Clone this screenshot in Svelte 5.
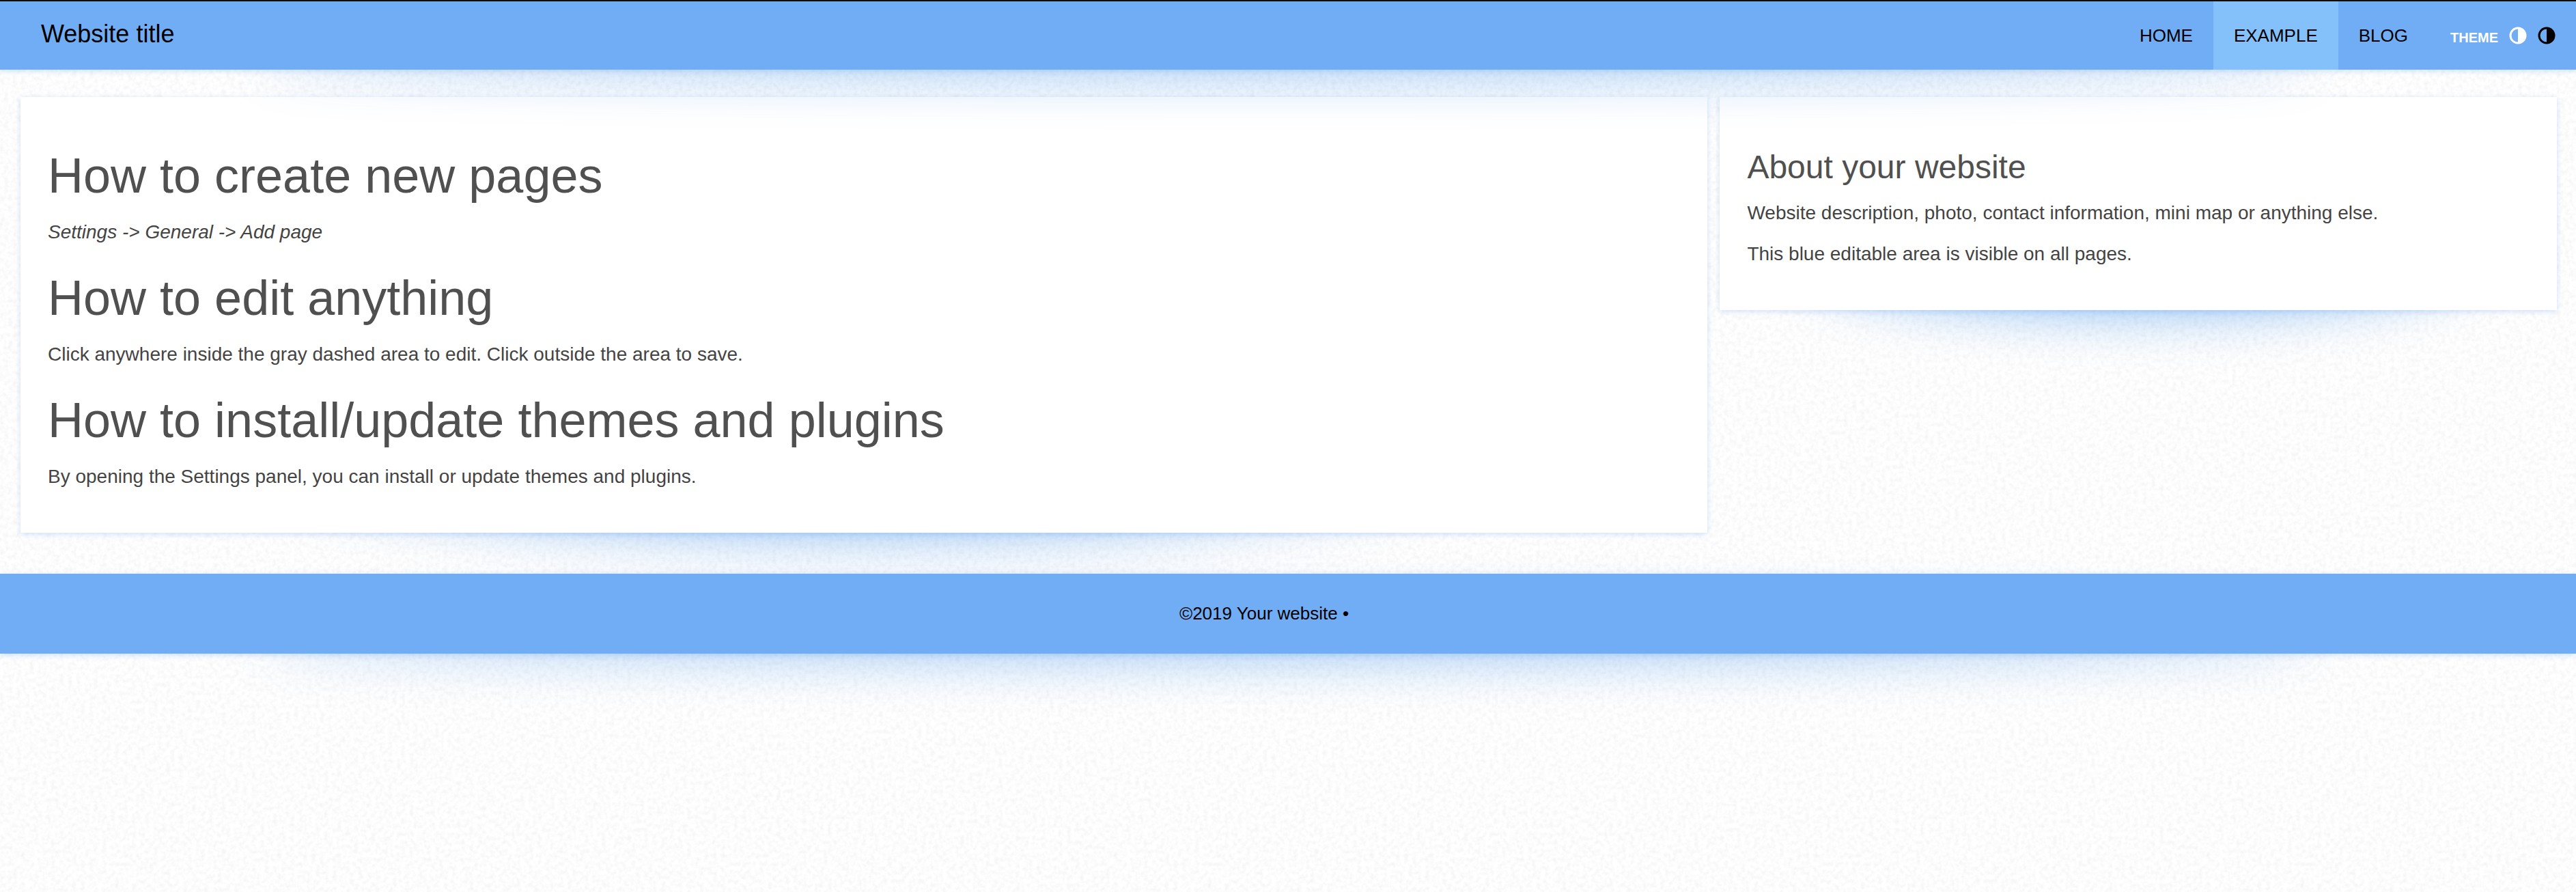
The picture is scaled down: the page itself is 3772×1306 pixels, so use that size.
<script>
  const pages = [
    { name: 'HOME', active: false },
    { name: 'EXAMPLE', active: true },
    { name: 'BLOG', active: false }
  ];
  const themes = [
    { name: 'Light theme', tone: 'light' },
    { name: 'Dark theme', tone: 'dark' }
  ];
</script>

<div class="page">
  <svg class="paper" aria-hidden="true">
    <filter id="grain" x="0" y="0" width="100%" height="100%">
      <feTurbulence type="fractalNoise" baseFrequency="0.16" numOctaves="3" seed="4" />
      <feColorMatrix values="0 0 0 0 0.4  0 0 0 0 0.4  0 0 0 0 0.4  0.24 0 0 0 -0.09" />
    </filter>
    <rect width="100%" height="100%" filter="url(#grain)" />
  </svg>

  <header class="glow">
    <div class="bar">
      <a class="brand" href="#home">Website title</a>
      <nav>
        {#each pages as page}
          <a href="#{page.name.toLowerCase()}" class:active={page.active}>{page.name}</a>
        {/each}
      </nav>
      <div class="themes">
        <span class="label">THEME</span>
        {#each themes as theme}
          <button class={theme.tone} aria-label={theme.name}>
            <svg viewBox="0 0 26 26">
              <circle cx="13" cy="13" r="11" fill="none" stroke="currentColor" stroke-width="3" />
              <path d="M13 1a12 12 0 0 1 0 24z" fill="currentColor" />
            </svg>
          </button>
        {/each}
      </div>
    </div>
  </header>

  <main>
    <article class="glow">
      <div class="card">
        <h1>How to create new pages</h1>
        <p><i>Settings -&gt; General -&gt; Add page</i></p>
        <h1>How to edit anything</h1>
        <p>Click anywhere inside the gray dashed area to edit. Click outside the area to save.</p>
        <h1>How to install/update themes and plugins</h1>
        <p>By opening the Settings panel, you can install or update themes and plugins.</p>
      </div>
    </article>
    <aside class="glow">
      <div class="card">
        <h2>About your website</h2>
        <p>Website description, photo, contact information, mini map or anything else.</p>
        <p>This blue editable area is visible on all pages.</p>
      </div>
    </aside>
  </main>

  <footer class="glow">
    <p>©2019 Your website •</p>
  </footer>
</div>

<style>
  :global(body) {
    background: #fff;
    font-family: "Liberation Sans", Arial, sans-serif;
    font-size: 28px;
    line-height: 40px;
    color: #444;
  }

  .page {
    position: relative;
    z-index: 0;
    min-height: 100vh;
  }

  .paper {
    position: absolute;
    inset: 0;
    z-index: -1;
    width: 100%;
    height: 100%;
  }

  /* Curved shadow thrown below a block */
  .glow {
    position: relative;
    z-index: 0;
  }
  .glow::after {
    content: "";
    position: absolute;
    z-index: -1;
    left: 10%;
    right: 10%;
    bottom: 0;
    height: 50%;
    border-radius: 50%;
    box-shadow: 0 0 80px rgba(0, 112, 232, 0.48);
    pointer-events: none;
  }

  header.glow {
    z-index: 2;
  }
  .bar {
    display: flex;
    align-items: stretch;
    height: 100px;
    border-top: 2px solid #130c08;
    padding: 0 30px 0 60px;
    background: #71adf4;
    box-shadow: 0 2px 8px rgba(80, 160, 240, 0.3);
  }

  .brand {
    display: flex;
    align-items: center;
    margin-right: auto;
    padding-bottom: 4px;
    font-size: 36px;
    color: #000;
    text-decoration: none;
  }

  nav {
    display: flex;
  }
  nav a {
    display: flex;
    align-items: center;
    padding: 0 30px;
    font-size: 26px;
    color: #000;
    text-decoration: none;
  }
  nav a.active {
    background: #84c1fb;
  }

  .themes {
    display: flex;
    align-items: center;
    gap: 16px;
    padding-left: 32px;
  }
  .label {
    padding-top: 6px;
    font-size: 20px;
    font-weight: bold;
    color: #fff;
  }
  button {
    width: 26px;
    height: 26px;
    padding: 0;
    border: 0;
    background: none;
    cursor: pointer;
  }
  button svg {
    display: block;
    width: 100%;
    height: 100%;
  }
  .light {
    color: #fff;
  }
  .dark {
    color: #000;
  }

  main {
    display: flex;
    align-items: flex-start;
    justify-content: space-between;
    margin: 40px 28px 60px 30px;
  }
  .card {
    padding: 39px 40px 42px;
    background: #fff;
    box-shadow: 0 2px 8px rgba(70, 140, 240, 0.25);
  }
  article {
    width: 66.5%;
  }
  aside {
    width: 33%;
  }

  h1,
  h2 {
    margin: 0;
    padding-top: 37px;
    font-weight: normal;
    color: #505050;
  }
  h1 {
    font-size: 72px;
    line-height: 79px;
    margin-bottom: 23px;
  }
  h1 ~ h1 {
    padding-top: 17px;
  }
  h2 {
    font-size: 48px;
    line-height: 53px;
    margin-bottom: 21px;
  }
  p {
    margin: 0 0 20px;
  }

  footer.glow {
    z-index: 1;
  }
  footer p {
    margin: 0;
    padding: 38px 70px 39px 0;
    text-align: center;
    font-size: 26px;
    color: #000;
    background: #71adf4;
    box-shadow: 0 2px 8px rgba(80, 160, 240, 0.3);
  }
</style>
